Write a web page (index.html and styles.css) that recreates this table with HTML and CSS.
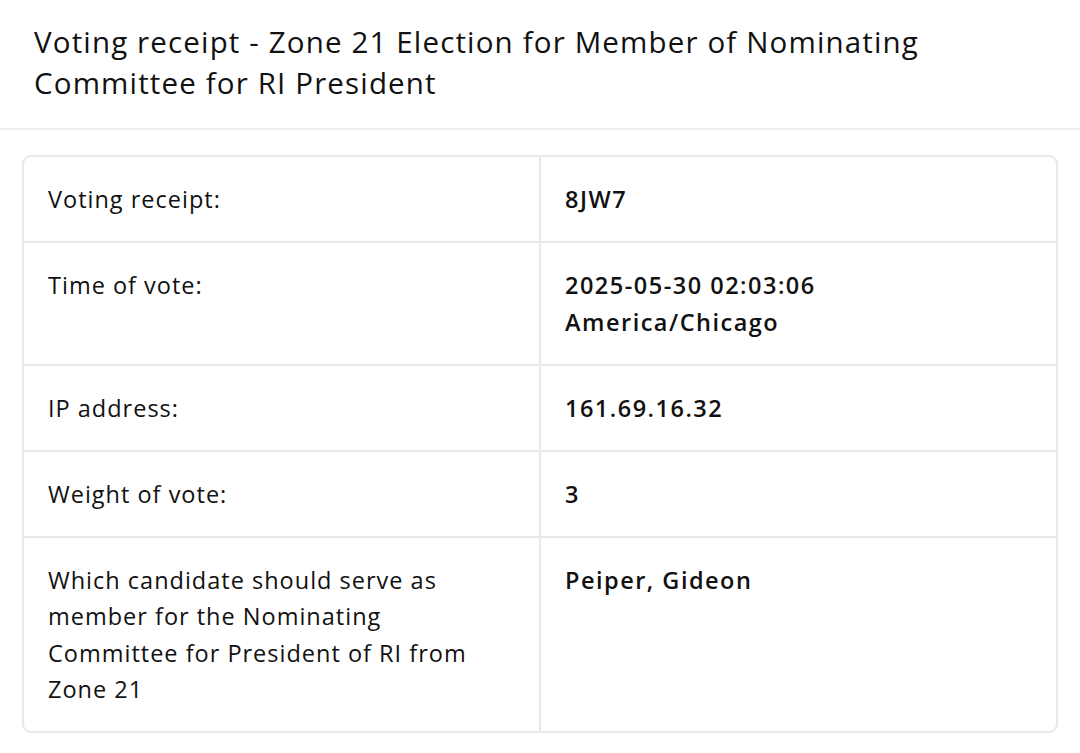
FILE: index.html
```html
<!DOCTYPE html>
<html lang="en">
<head>
<meta charset="utf-8">
<title>Voting receipt</title>
<link rel="stylesheet" href="styles.css">
</head>
<body>
<header class="page-header">
  <h1 class="title">Voting receipt - Zone 21 Election for Member of Nominating Committee for RI President</h1>
</header>
<main class="content">
  <div class="receipt">
    <div class="row">
      <div class="cell label">Voting receipt:</div>
      <div class="cell value">8JW7</div>
    </div>
    <div class="row">
      <div class="cell label">Time of vote:</div>
      <div class="cell value">2025-05-30 02:03:06 America/Chicago</div>
    </div>
    <div class="row">
      <div class="cell label">IP address:</div>
      <div class="cell value">161.69.16.32</div>
    </div>
    <div class="row">
      <div class="cell label">Weight of vote:</div>
      <div class="cell value">3</div>
    </div>
    <div class="row">
      <div class="cell label">Which candidate should serve as member for the Nominating Committee for President of RI from Zone 21</div>
      <div class="cell value">Peiper, Gideon</div>
    </div>
  </div>
</main>
</body>
</html>
```

FILE: styles.css
```css
* { box-sizing: border-box; }
html, body { margin: 0; padding: 0; background: #ffffff; }
body {
  font-family: "Open Sans", "Liberation Sans", sans-serif;
  color: #111111;
}
.page-header {
  padding: 21px 34px 25px;
  border-bottom: 2px solid #ececf0;
}
.title {
  margin: 0;
  font-size: 29.5px;
  font-weight: 400;
  line-height: 41px;
  letter-spacing: 1.15px;
  color: #111111;
  max-width: 940px;
}
.content {
  padding: 25px 22px;
}
.receipt {
  border: 2px solid #e8e8ee;
  border-radius: 9px;
  overflow: hidden;
}
.row {
  display: grid;
  grid-template-columns: 517fr 515fr;
  border-top: 2px solid #e8e8ee;
}
.row:first-child { border-top: none; }
.cell {
  padding: 24px 24px 23.5px;
  font-size: 23.5px;
  line-height: 36.5px;
}
.label {
  border-right: 2px solid #e8e8ee;
  font-weight: 400;
  letter-spacing: 1px;
}
.value {
  font-weight: 600;
  letter-spacing: 1.5px;
  padding-left: 24px;
}
```
